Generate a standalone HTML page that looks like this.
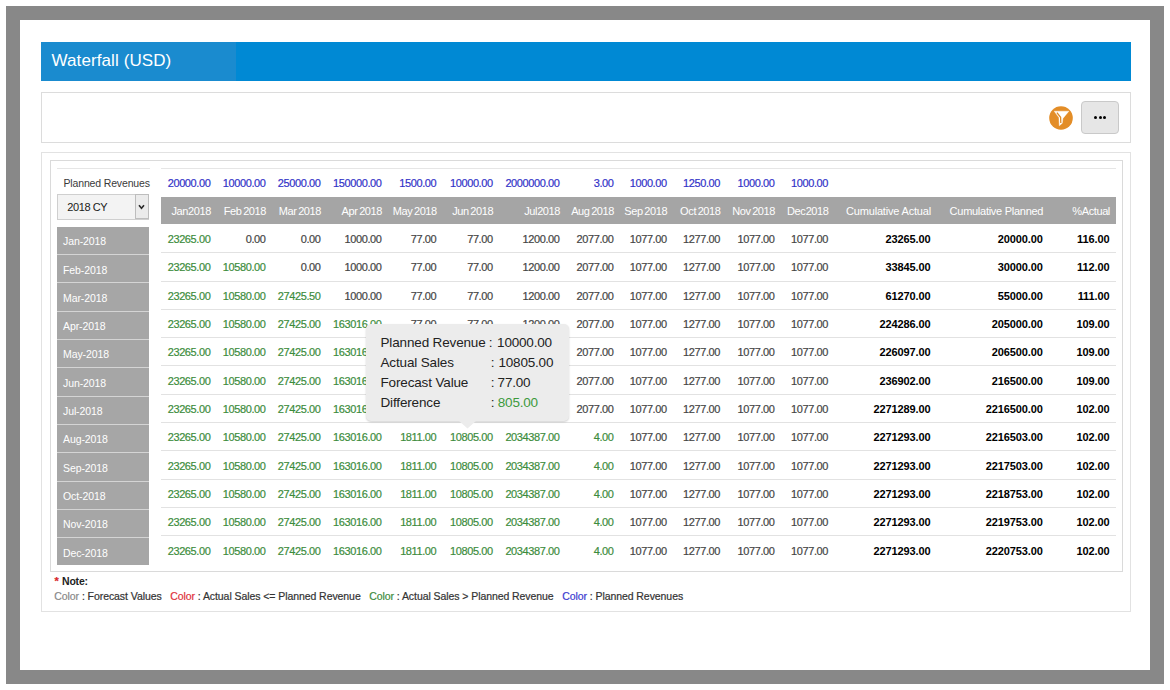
<!DOCTYPE html>
<html><head><meta charset="utf-8"><title>Waterfall (USD)</title>
<style>
html,body{margin:0;padding:0;background:#fff;}
body{width:1170px;height:690px;position:relative;overflow:hidden;font-family:"Liberation Sans", sans-serif;}
.b{position:absolute;}
.t{position:absolute;line-height:1;white-space:nowrap;-webkit-text-stroke:0.2px currentColor;}
.ns{-webkit-text-stroke:0;}
</style></head><body>
<div class="b" style="left:6px;top:6px;width:1158px;height:678px;background:#888888;"></div>
<div class="b" style="left:20px;top:20px;width:1130px;height:650px;background:#ffffff;"></div>
<div class="b" style="left:41px;top:42px;width:1090px;height:39px;background:#0089d4;"></div>
<div class="b" style="left:41px;top:42px;width:195px;height:39px;background:#1a8bcf;"></div>
<div class="t ns" style="left:51.50px;top:52.21px;font-size:17px;color:#ffffff;font-weight:normal;letter-spacing:0.1px;">Waterfall (USD)</div>
<div class="b" style="left:41px;top:92px;width:1090px;height:51px;border:1px solid #dcdcdc;box-sizing:border-box;"></div>
<svg class="b" style="left:1049px;top:106px" width="24" height="24" viewBox="0 0 24 24"><circle cx="12" cy="12" r="11.8" fill="#e38d27"/><path d="M5.2 5.2 L19.9 5.2 L13.9 12.4 L13.3 17.2 L10.3 19.8 L9.9 11.6 Z" fill="#ffffff" stroke="#ffffff" stroke-width="0.4" stroke-linejoin="round"/><path d="M7.9 6.6 L11.6 11.3 L11.8 17" stroke="#df8a25" stroke-width="1.3" fill="none"/></svg>
<div class="b" style="left:1081px;top:101px;width:38px;height:33px;box-sizing:border-box;border:1px solid #c9c9c9;border-radius:4px;background:#e6e6e6;"></div>
<div class="b" style="left:1094.00px;top:115.50px;width:3.2px;height:3.2px;border-radius:50%;background:#000;"></div>
<div class="b" style="left:1098.50px;top:115.50px;width:3.2px;height:3.2px;border-radius:50%;background:#000;"></div>
<div class="b" style="left:1103.00px;top:115.50px;width:3.2px;height:3.2px;border-radius:50%;background:#000;"></div>
<div class="b" style="left:41px;top:152px;width:1090px;height:460px;border:1px solid #e2e2e2;box-sizing:border-box;"></div>
<div class="b" style="left:50px;top:160px;width:1073px;height:412px;border:1px solid #dadada;box-sizing:border-box;"></div>
<div class="b" style="left:57px;top:167.5px;width:93px;height:1.5px;background:#e6e6e6;"></div>
<div class="b" style="left:161px;top:167.5px;width:955px;height:1.5px;background:#e6e6e6;"></div>
<div class="t ns" style="left:63.50px;top:178.11px;font-size:10.5px;color:#3a3a3a;font-weight:normal;letter-spacing:-0.15px;">Planned Revenues</div>
<div class="b" style="left:57px;top:194px;width:92px;height:26px;border:1px solid #cfcfcf;box-sizing:border-box;background:#f3f3f3;"></div>
<div class="b" style="left:135px;top:194px;width:14px;height:25px;border:1px solid #bdbdbd;box-sizing:border-box;background:#ebebeb;"></div>
<svg class="b" style="left:138px;top:203.5px" width="7" height="6" viewBox="0 0 7 6"><path d="M1.0 1.3 L3.5 4.3 L6.0 1.3" stroke="#2a2a2a" stroke-width="1.6" fill="none"/></svg>
<div class="t ns" style="left:67.30px;top:201.89px;font-size:11px;color:#1a1a1a;font-weight:normal;letter-spacing:-0.4px;">2018 CY</div>
<div class="b" style="left:161px;top:197px;width:955px;height:27px;background:#a5a5a5;"></div>
<div class="t" style="right:959.60px;top:178.09px;font-size:11.0px;color:#3232c8;font-weight:normal;letter-spacing:-0.4px;">20000.00</div>
<div class="t" style="right:904.50px;top:178.09px;font-size:11.0px;color:#3232c8;font-weight:normal;letter-spacing:-0.4px;">10000.00</div>
<div class="t" style="right:849.50px;top:178.09px;font-size:11.0px;color:#3232c8;font-weight:normal;letter-spacing:-0.4px;">25000.00</div>
<div class="t" style="right:788.50px;top:178.09px;font-size:11.0px;color:#3232c8;font-weight:normal;letter-spacing:-0.4px;">150000.00</div>
<div class="t" style="right:733.70px;top:178.09px;font-size:11.0px;color:#3232c8;font-weight:normal;letter-spacing:-0.4px;">1500.00</div>
<div class="t" style="right:677.30px;top:178.09px;font-size:11.0px;color:#3232c8;font-weight:normal;letter-spacing:-0.4px;">10000.00</div>
<div class="t" style="right:610.50px;top:178.09px;font-size:11.0px;color:#3232c8;font-weight:normal;letter-spacing:-0.4px;">2000000.00</div>
<div class="t" style="right:556.50px;top:178.09px;font-size:11.0px;color:#3232c8;font-weight:normal;letter-spacing:-0.4px;">3.00</div>
<div class="t" style="right:503.30px;top:178.09px;font-size:11.0px;color:#3232c8;font-weight:normal;letter-spacing:-0.4px;">1000.00</div>
<div class="t" style="right:450.00px;top:178.09px;font-size:11.0px;color:#3232c8;font-weight:normal;letter-spacing:-0.4px;">1250.00</div>
<div class="t" style="right:395.50px;top:178.09px;font-size:11.0px;color:#3232c8;font-weight:normal;letter-spacing:-0.4px;">1000.00</div>
<div class="t" style="right:342.00px;top:178.09px;font-size:11.0px;color:#3232c8;font-weight:normal;letter-spacing:-0.4px;">1000.00</div>
<div class="t ns" style="right:959.10px;top:205.99px;font-size:11.0px;color:#ffffff;font-weight:normal;letter-spacing:-0.4px;">Ja<span style="margin-right:0px">n</span>2018</div>
<div class="t ns" style="right:904.00px;top:205.99px;font-size:11.0px;color:#ffffff;font-weight:normal;letter-spacing:-0.4px;">Fe<span style="margin-right:1.6px">b</span>2018</div>
<div class="t ns" style="right:849.00px;top:205.99px;font-size:11.0px;color:#ffffff;font-weight:normal;letter-spacing:-0.4px;">Ma<span style="margin-right:1.6px">r</span>2018</div>
<div class="t ns" style="right:788.00px;top:205.99px;font-size:11.0px;color:#ffffff;font-weight:normal;letter-spacing:-0.4px;">Ap<span style="margin-right:1.6px">r</span>2018</div>
<div class="t ns" style="right:733.20px;top:205.99px;font-size:11.0px;color:#ffffff;font-weight:normal;letter-spacing:-0.4px;">Ma<span style="margin-right:1.6px">y</span>2018</div>
<div class="t ns" style="right:676.80px;top:205.99px;font-size:11.0px;color:#ffffff;font-weight:normal;letter-spacing:-0.4px;">Ju<span style="margin-right:1.6px">n</span>2018</div>
<div class="t ns" style="right:610.00px;top:205.99px;font-size:11.0px;color:#ffffff;font-weight:normal;letter-spacing:-0.4px;">Ju<span style="margin-right:0px">l</span>2018</div>
<div class="t ns" style="right:556.00px;top:205.99px;font-size:11.0px;color:#ffffff;font-weight:normal;letter-spacing:-0.4px;">Au<span style="margin-right:1.6px">g</span>2018</div>
<div class="t ns" style="right:502.80px;top:205.99px;font-size:11.0px;color:#ffffff;font-weight:normal;letter-spacing:-0.4px;">Se<span style="margin-right:1.6px">p</span>2018</div>
<div class="t ns" style="right:449.50px;top:205.99px;font-size:11.0px;color:#ffffff;font-weight:normal;letter-spacing:-0.4px;">Oc<span style="margin-right:1.6px">t</span>2018</div>
<div class="t ns" style="right:395.00px;top:205.99px;font-size:11.0px;color:#ffffff;font-weight:normal;letter-spacing:-0.4px;">No<span style="margin-right:1.6px">v</span>2018</div>
<div class="t ns" style="right:341.50px;top:205.99px;font-size:11.0px;color:#ffffff;font-weight:normal;letter-spacing:-0.4px;">De<span style="margin-right:0.3px">c</span>2018</div>
<div class="t ns" style="right:239.00px;top:205.99px;font-size:11.0px;color:#ffffff;font-weight:normal;letter-spacing:-0.18px;">Cumulative Actual</div>
<div class="t ns" style="right:126.80px;top:205.99px;font-size:11.0px;color:#ffffff;font-weight:normal;letter-spacing:-0.27px;">Cumulative Planned</div>
<div class="t ns" style="right:60.10px;top:205.99px;font-size:11.0px;color:#ffffff;font-weight:normal;letter-spacing:-0.4px;">%Actual</div>
<div class="b" style="left:57px;top:226.6px;width:92px;height:338.4px;background:#a6a6a6;"></div>
<div class="b" style="left:57px;top:254px;width:92px;height:1px;background:#d4d4d4;"></div>
<div class="t ns" style="left:63.00px;top:236.21px;font-size:10.5px;color:#ffffff;font-weight:normal;letter-spacing:-0.1px;">Jan-2018</div>
<div class="b" style="left:57px;top:282px;width:92px;height:1px;background:#d4d4d4;"></div>
<div class="t ns" style="left:63.00px;top:264.53px;font-size:10.5px;color:#ffffff;font-weight:normal;letter-spacing:-0.1px;">Feb-2018</div>
<div class="b" style="left:57px;top:311px;width:92px;height:1px;background:#d4d4d4;"></div>
<div class="t ns" style="left:63.00px;top:292.85px;font-size:10.5px;color:#ffffff;font-weight:normal;letter-spacing:-0.1px;">Mar-2018</div>
<div class="b" style="left:57px;top:339px;width:92px;height:1px;background:#d4d4d4;"></div>
<div class="t ns" style="left:63.00px;top:321.17px;font-size:10.5px;color:#ffffff;font-weight:normal;letter-spacing:-0.1px;">Apr-2018</div>
<div class="b" style="left:57px;top:367px;width:92px;height:1px;background:#d4d4d4;"></div>
<div class="t ns" style="left:63.00px;top:349.49px;font-size:10.5px;color:#ffffff;font-weight:normal;letter-spacing:-0.1px;">May-2018</div>
<div class="b" style="left:57px;top:396px;width:92px;height:1px;background:#d4d4d4;"></div>
<div class="t ns" style="left:63.00px;top:377.81px;font-size:10.5px;color:#ffffff;font-weight:normal;letter-spacing:-0.1px;">Jun-2018</div>
<div class="b" style="left:57px;top:424px;width:92px;height:1px;background:#d4d4d4;"></div>
<div class="t ns" style="left:63.00px;top:406.13px;font-size:10.5px;color:#ffffff;font-weight:normal;letter-spacing:-0.1px;">Jul-2018</div>
<div class="b" style="left:57px;top:452px;width:92px;height:1px;background:#d4d4d4;"></div>
<div class="t ns" style="left:63.00px;top:434.45px;font-size:10.5px;color:#ffffff;font-weight:normal;letter-spacing:-0.1px;">Aug-2018</div>
<div class="b" style="left:57px;top:481px;width:92px;height:1px;background:#d4d4d4;"></div>
<div class="t ns" style="left:63.00px;top:462.77px;font-size:10.5px;color:#ffffff;font-weight:normal;letter-spacing:-0.1px;">Sep-2018</div>
<div class="b" style="left:57px;top:509px;width:92px;height:1px;background:#d4d4d4;"></div>
<div class="t ns" style="left:63.00px;top:491.09px;font-size:10.5px;color:#ffffff;font-weight:normal;letter-spacing:-0.1px;">Oct-2018</div>
<div class="b" style="left:57px;top:537px;width:92px;height:1px;background:#d4d4d4;"></div>
<div class="t ns" style="left:63.00px;top:519.41px;font-size:10.5px;color:#ffffff;font-weight:normal;letter-spacing:-0.1px;">Nov-2018</div>
<div class="t ns" style="left:63.00px;top:547.73px;font-size:10.5px;color:#ffffff;font-weight:normal;letter-spacing:-0.1px;">Dec-2018</div>
<div class="b" style="left:161px;top:252px;width:955px;height:1px;background:#e2e2e2;"></div>
<div class="b" style="left:161px;top:281px;width:955px;height:1px;background:#e2e2e2;"></div>
<div class="b" style="left:161px;top:309px;width:955px;height:1px;background:#e2e2e2;"></div>
<div class="b" style="left:161px;top:337px;width:955px;height:1px;background:#e2e2e2;"></div>
<div class="b" style="left:161px;top:365px;width:955px;height:1px;background:#e2e2e2;"></div>
<div class="b" style="left:161px;top:394px;width:955px;height:1px;background:#e2e2e2;"></div>
<div class="b" style="left:161px;top:422px;width:955px;height:1px;background:#e2e2e2;"></div>
<div class="b" style="left:161px;top:450px;width:955px;height:1px;background:#e2e2e2;"></div>
<div class="b" style="left:161px;top:479px;width:955px;height:1px;background:#e2e2e2;"></div>
<div class="b" style="left:161px;top:507px;width:955px;height:1px;background:#e2e2e2;"></div>
<div class="b" style="left:161px;top:535px;width:955px;height:1px;background:#e2e2e2;"></div>
<div class="t" style="right:959.60px;top:234.09px;font-size:11.0px;color:#3c8c3c;font-weight:normal;letter-spacing:-0.4px;">23265.00</div>
<div class="t" style="right:904.50px;top:234.09px;font-size:11.0px;color:#454545;font-weight:normal;letter-spacing:-0.4px;">0.00</div>
<div class="t" style="right:849.50px;top:234.09px;font-size:11.0px;color:#454545;font-weight:normal;letter-spacing:-0.4px;">0.00</div>
<div class="t" style="right:788.50px;top:234.09px;font-size:11.0px;color:#454545;font-weight:normal;letter-spacing:-0.4px;">1000.00</div>
<div class="t" style="right:733.70px;top:234.09px;font-size:11.0px;color:#454545;font-weight:normal;letter-spacing:-0.4px;">77.00</div>
<div class="t" style="right:677.30px;top:234.09px;font-size:11.0px;color:#454545;font-weight:normal;letter-spacing:-0.4px;">77.00</div>
<div class="t" style="right:610.50px;top:234.09px;font-size:11.0px;color:#454545;font-weight:normal;letter-spacing:-0.4px;">1200.00</div>
<div class="t" style="right:556.50px;top:234.09px;font-size:11.0px;color:#454545;font-weight:normal;letter-spacing:-0.4px;">2077.00</div>
<div class="t" style="right:503.30px;top:234.09px;font-size:11.0px;color:#454545;font-weight:normal;letter-spacing:-0.4px;">1077.00</div>
<div class="t" style="right:450.00px;top:234.09px;font-size:11.0px;color:#454545;font-weight:normal;letter-spacing:-0.4px;">1277.00</div>
<div class="t" style="right:395.50px;top:234.09px;font-size:11.0px;color:#454545;font-weight:normal;letter-spacing:-0.4px;">1077.00</div>
<div class="t" style="right:342.00px;top:234.09px;font-size:11.0px;color:#454545;font-weight:normal;letter-spacing:-0.4px;">1077.00</div>
<div class="t ns" style="right:239.50px;top:234.09px;font-size:11.0px;color:#000;font-weight:bold;letter-spacing:-0.12px;">23265.00</div>
<div class="t ns" style="right:127.30px;top:234.09px;font-size:11.0px;color:#000;font-weight:bold;letter-spacing:-0.12px;">20000.00</div>
<div class="t ns" style="right:60.60px;top:234.09px;font-size:11.0px;color:#000;font-weight:bold;letter-spacing:-0.12px;">116.00</div>
<div class="t" style="right:959.60px;top:262.41px;font-size:11.0px;color:#3c8c3c;font-weight:normal;letter-spacing:-0.4px;">23265.00</div>
<div class="t" style="right:904.50px;top:262.41px;font-size:11.0px;color:#3c8c3c;font-weight:normal;letter-spacing:-0.4px;">10580.00</div>
<div class="t" style="right:849.50px;top:262.41px;font-size:11.0px;color:#454545;font-weight:normal;letter-spacing:-0.4px;">0.00</div>
<div class="t" style="right:788.50px;top:262.41px;font-size:11.0px;color:#454545;font-weight:normal;letter-spacing:-0.4px;">1000.00</div>
<div class="t" style="right:733.70px;top:262.41px;font-size:11.0px;color:#454545;font-weight:normal;letter-spacing:-0.4px;">77.00</div>
<div class="t" style="right:677.30px;top:262.41px;font-size:11.0px;color:#454545;font-weight:normal;letter-spacing:-0.4px;">77.00</div>
<div class="t" style="right:610.50px;top:262.41px;font-size:11.0px;color:#454545;font-weight:normal;letter-spacing:-0.4px;">1200.00</div>
<div class="t" style="right:556.50px;top:262.41px;font-size:11.0px;color:#454545;font-weight:normal;letter-spacing:-0.4px;">2077.00</div>
<div class="t" style="right:503.30px;top:262.41px;font-size:11.0px;color:#454545;font-weight:normal;letter-spacing:-0.4px;">1077.00</div>
<div class="t" style="right:450.00px;top:262.41px;font-size:11.0px;color:#454545;font-weight:normal;letter-spacing:-0.4px;">1277.00</div>
<div class="t" style="right:395.50px;top:262.41px;font-size:11.0px;color:#454545;font-weight:normal;letter-spacing:-0.4px;">1077.00</div>
<div class="t" style="right:342.00px;top:262.41px;font-size:11.0px;color:#454545;font-weight:normal;letter-spacing:-0.4px;">1077.00</div>
<div class="t ns" style="right:239.50px;top:262.41px;font-size:11.0px;color:#000;font-weight:bold;letter-spacing:-0.12px;">33845.00</div>
<div class="t ns" style="right:127.30px;top:262.41px;font-size:11.0px;color:#000;font-weight:bold;letter-spacing:-0.12px;">30000.00</div>
<div class="t ns" style="right:60.60px;top:262.41px;font-size:11.0px;color:#000;font-weight:bold;letter-spacing:-0.12px;">112.00</div>
<div class="t" style="right:959.60px;top:290.73px;font-size:11.0px;color:#3c8c3c;font-weight:normal;letter-spacing:-0.4px;">23265.00</div>
<div class="t" style="right:904.50px;top:290.73px;font-size:11.0px;color:#3c8c3c;font-weight:normal;letter-spacing:-0.4px;">10580.00</div>
<div class="t" style="right:849.50px;top:290.73px;font-size:11.0px;color:#3c8c3c;font-weight:normal;letter-spacing:-0.4px;">27425.50</div>
<div class="t" style="right:788.50px;top:290.73px;font-size:11.0px;color:#454545;font-weight:normal;letter-spacing:-0.4px;">1000.00</div>
<div class="t" style="right:733.70px;top:290.73px;font-size:11.0px;color:#454545;font-weight:normal;letter-spacing:-0.4px;">77.00</div>
<div class="t" style="right:677.30px;top:290.73px;font-size:11.0px;color:#454545;font-weight:normal;letter-spacing:-0.4px;">77.00</div>
<div class="t" style="right:610.50px;top:290.73px;font-size:11.0px;color:#454545;font-weight:normal;letter-spacing:-0.4px;">1200.00</div>
<div class="t" style="right:556.50px;top:290.73px;font-size:11.0px;color:#454545;font-weight:normal;letter-spacing:-0.4px;">2077.00</div>
<div class="t" style="right:503.30px;top:290.73px;font-size:11.0px;color:#454545;font-weight:normal;letter-spacing:-0.4px;">1077.00</div>
<div class="t" style="right:450.00px;top:290.73px;font-size:11.0px;color:#454545;font-weight:normal;letter-spacing:-0.4px;">1277.00</div>
<div class="t" style="right:395.50px;top:290.73px;font-size:11.0px;color:#454545;font-weight:normal;letter-spacing:-0.4px;">1077.00</div>
<div class="t" style="right:342.00px;top:290.73px;font-size:11.0px;color:#454545;font-weight:normal;letter-spacing:-0.4px;">1077.00</div>
<div class="t ns" style="right:239.50px;top:290.73px;font-size:11.0px;color:#000;font-weight:bold;letter-spacing:-0.12px;">61270.00</div>
<div class="t ns" style="right:127.30px;top:290.73px;font-size:11.0px;color:#000;font-weight:bold;letter-spacing:-0.12px;">55000.00</div>
<div class="t ns" style="right:60.60px;top:290.73px;font-size:11.0px;color:#000;font-weight:bold;letter-spacing:-0.12px;">111.00</div>
<div class="t" style="right:959.60px;top:319.05px;font-size:11.0px;color:#3c8c3c;font-weight:normal;letter-spacing:-0.4px;">23265.00</div>
<div class="t" style="right:904.50px;top:319.05px;font-size:11.0px;color:#3c8c3c;font-weight:normal;letter-spacing:-0.4px;">10580.00</div>
<div class="t" style="right:849.50px;top:319.05px;font-size:11.0px;color:#3c8c3c;font-weight:normal;letter-spacing:-0.4px;">27425.00</div>
<div class="t" style="right:788.50px;top:319.05px;font-size:11.0px;color:#3c8c3c;font-weight:normal;letter-spacing:-0.4px;">163016.00</div>
<div class="t" style="right:733.70px;top:319.05px;font-size:11.0px;color:#454545;font-weight:normal;letter-spacing:-0.4px;">77.00</div>
<div class="t" style="right:677.30px;top:319.05px;font-size:11.0px;color:#454545;font-weight:normal;letter-spacing:-0.4px;">77.00</div>
<div class="t" style="right:610.50px;top:319.05px;font-size:11.0px;color:#454545;font-weight:normal;letter-spacing:-0.4px;">1200.00</div>
<div class="t" style="right:556.50px;top:319.05px;font-size:11.0px;color:#454545;font-weight:normal;letter-spacing:-0.4px;">2077.00</div>
<div class="t" style="right:503.30px;top:319.05px;font-size:11.0px;color:#454545;font-weight:normal;letter-spacing:-0.4px;">1077.00</div>
<div class="t" style="right:450.00px;top:319.05px;font-size:11.0px;color:#454545;font-weight:normal;letter-spacing:-0.4px;">1277.00</div>
<div class="t" style="right:395.50px;top:319.05px;font-size:11.0px;color:#454545;font-weight:normal;letter-spacing:-0.4px;">1077.00</div>
<div class="t" style="right:342.00px;top:319.05px;font-size:11.0px;color:#454545;font-weight:normal;letter-spacing:-0.4px;">1077.00</div>
<div class="t ns" style="right:239.50px;top:319.05px;font-size:11.0px;color:#000;font-weight:bold;letter-spacing:-0.12px;">224286.00</div>
<div class="t ns" style="right:127.30px;top:319.05px;font-size:11.0px;color:#000;font-weight:bold;letter-spacing:-0.12px;">205000.00</div>
<div class="t ns" style="right:60.60px;top:319.05px;font-size:11.0px;color:#000;font-weight:bold;letter-spacing:-0.12px;">109.00</div>
<div class="t" style="right:959.60px;top:347.37px;font-size:11.0px;color:#3c8c3c;font-weight:normal;letter-spacing:-0.4px;">23265.00</div>
<div class="t" style="right:904.50px;top:347.37px;font-size:11.0px;color:#3c8c3c;font-weight:normal;letter-spacing:-0.4px;">10580.00</div>
<div class="t" style="right:849.50px;top:347.37px;font-size:11.0px;color:#3c8c3c;font-weight:normal;letter-spacing:-0.4px;">27425.00</div>
<div class="t" style="right:788.50px;top:347.37px;font-size:11.0px;color:#3c8c3c;font-weight:normal;letter-spacing:-0.4px;">163016.00</div>
<div class="t" style="right:733.70px;top:347.37px;font-size:11.0px;color:#3c8c3c;font-weight:normal;letter-spacing:-0.4px;">1811.00</div>
<div class="t" style="right:677.30px;top:347.37px;font-size:11.0px;color:#454545;font-weight:normal;letter-spacing:-0.4px;">77.00</div>
<div class="t" style="right:610.50px;top:347.37px;font-size:11.0px;color:#454545;font-weight:normal;letter-spacing:-0.4px;">1200.00</div>
<div class="t" style="right:556.50px;top:347.37px;font-size:11.0px;color:#454545;font-weight:normal;letter-spacing:-0.4px;">2077.00</div>
<div class="t" style="right:503.30px;top:347.37px;font-size:11.0px;color:#454545;font-weight:normal;letter-spacing:-0.4px;">1077.00</div>
<div class="t" style="right:450.00px;top:347.37px;font-size:11.0px;color:#454545;font-weight:normal;letter-spacing:-0.4px;">1277.00</div>
<div class="t" style="right:395.50px;top:347.37px;font-size:11.0px;color:#454545;font-weight:normal;letter-spacing:-0.4px;">1077.00</div>
<div class="t" style="right:342.00px;top:347.37px;font-size:11.0px;color:#454545;font-weight:normal;letter-spacing:-0.4px;">1077.00</div>
<div class="t ns" style="right:239.50px;top:347.37px;font-size:11.0px;color:#000;font-weight:bold;letter-spacing:-0.12px;">226097.00</div>
<div class="t ns" style="right:127.30px;top:347.37px;font-size:11.0px;color:#000;font-weight:bold;letter-spacing:-0.12px;">206500.00</div>
<div class="t ns" style="right:60.60px;top:347.37px;font-size:11.0px;color:#000;font-weight:bold;letter-spacing:-0.12px;">109.00</div>
<div class="t" style="right:959.60px;top:375.69px;font-size:11.0px;color:#3c8c3c;font-weight:normal;letter-spacing:-0.4px;">23265.00</div>
<div class="t" style="right:904.50px;top:375.69px;font-size:11.0px;color:#3c8c3c;font-weight:normal;letter-spacing:-0.4px;">10580.00</div>
<div class="t" style="right:849.50px;top:375.69px;font-size:11.0px;color:#3c8c3c;font-weight:normal;letter-spacing:-0.4px;">27425.00</div>
<div class="t" style="right:788.50px;top:375.69px;font-size:11.0px;color:#3c8c3c;font-weight:normal;letter-spacing:-0.4px;">163016.00</div>
<div class="t" style="right:733.70px;top:375.69px;font-size:11.0px;color:#3c8c3c;font-weight:normal;letter-spacing:-0.4px;">1811.00</div>
<div class="t" style="right:677.30px;top:375.69px;font-size:11.0px;color:#3c8c3c;font-weight:normal;letter-spacing:-0.4px;">10805.00</div>
<div class="t" style="right:610.50px;top:375.69px;font-size:11.0px;color:#454545;font-weight:normal;letter-spacing:-0.4px;">1200.00</div>
<div class="t" style="right:556.50px;top:375.69px;font-size:11.0px;color:#454545;font-weight:normal;letter-spacing:-0.4px;">2077.00</div>
<div class="t" style="right:503.30px;top:375.69px;font-size:11.0px;color:#454545;font-weight:normal;letter-spacing:-0.4px;">1077.00</div>
<div class="t" style="right:450.00px;top:375.69px;font-size:11.0px;color:#454545;font-weight:normal;letter-spacing:-0.4px;">1277.00</div>
<div class="t" style="right:395.50px;top:375.69px;font-size:11.0px;color:#454545;font-weight:normal;letter-spacing:-0.4px;">1077.00</div>
<div class="t" style="right:342.00px;top:375.69px;font-size:11.0px;color:#454545;font-weight:normal;letter-spacing:-0.4px;">1077.00</div>
<div class="t ns" style="right:239.50px;top:375.69px;font-size:11.0px;color:#000;font-weight:bold;letter-spacing:-0.12px;">236902.00</div>
<div class="t ns" style="right:127.30px;top:375.69px;font-size:11.0px;color:#000;font-weight:bold;letter-spacing:-0.12px;">216500.00</div>
<div class="t ns" style="right:60.60px;top:375.69px;font-size:11.0px;color:#000;font-weight:bold;letter-spacing:-0.12px;">109.00</div>
<div class="t" style="right:959.60px;top:404.01px;font-size:11.0px;color:#3c8c3c;font-weight:normal;letter-spacing:-0.4px;">23265.00</div>
<div class="t" style="right:904.50px;top:404.01px;font-size:11.0px;color:#3c8c3c;font-weight:normal;letter-spacing:-0.4px;">10580.00</div>
<div class="t" style="right:849.50px;top:404.01px;font-size:11.0px;color:#3c8c3c;font-weight:normal;letter-spacing:-0.4px;">27425.00</div>
<div class="t" style="right:788.50px;top:404.01px;font-size:11.0px;color:#3c8c3c;font-weight:normal;letter-spacing:-0.4px;">163016.00</div>
<div class="t" style="right:733.70px;top:404.01px;font-size:11.0px;color:#3c8c3c;font-weight:normal;letter-spacing:-0.4px;">1811.00</div>
<div class="t" style="right:677.30px;top:404.01px;font-size:11.0px;color:#3c8c3c;font-weight:normal;letter-spacing:-0.4px;">10805.00</div>
<div class="t" style="right:610.50px;top:404.01px;font-size:11.0px;color:#3c8c3c;font-weight:normal;letter-spacing:-0.4px;">2034387.00</div>
<div class="t" style="right:556.50px;top:404.01px;font-size:11.0px;color:#454545;font-weight:normal;letter-spacing:-0.4px;">2077.00</div>
<div class="t" style="right:503.30px;top:404.01px;font-size:11.0px;color:#454545;font-weight:normal;letter-spacing:-0.4px;">1077.00</div>
<div class="t" style="right:450.00px;top:404.01px;font-size:11.0px;color:#454545;font-weight:normal;letter-spacing:-0.4px;">1277.00</div>
<div class="t" style="right:395.50px;top:404.01px;font-size:11.0px;color:#454545;font-weight:normal;letter-spacing:-0.4px;">1077.00</div>
<div class="t" style="right:342.00px;top:404.01px;font-size:11.0px;color:#454545;font-weight:normal;letter-spacing:-0.4px;">1077.00</div>
<div class="t ns" style="right:239.50px;top:404.01px;font-size:11.0px;color:#000;font-weight:bold;letter-spacing:-0.12px;">2271289.00</div>
<div class="t ns" style="right:127.30px;top:404.01px;font-size:11.0px;color:#000;font-weight:bold;letter-spacing:-0.12px;">2216500.00</div>
<div class="t ns" style="right:60.60px;top:404.01px;font-size:11.0px;color:#000;font-weight:bold;letter-spacing:-0.12px;">102.00</div>
<div class="t" style="right:959.60px;top:432.33px;font-size:11.0px;color:#3c8c3c;font-weight:normal;letter-spacing:-0.4px;">23265.00</div>
<div class="t" style="right:904.50px;top:432.33px;font-size:11.0px;color:#3c8c3c;font-weight:normal;letter-spacing:-0.4px;">10580.00</div>
<div class="t" style="right:849.50px;top:432.33px;font-size:11.0px;color:#3c8c3c;font-weight:normal;letter-spacing:-0.4px;">27425.00</div>
<div class="t" style="right:788.50px;top:432.33px;font-size:11.0px;color:#3c8c3c;font-weight:normal;letter-spacing:-0.4px;">163016.00</div>
<div class="t" style="right:733.70px;top:432.33px;font-size:11.0px;color:#3c8c3c;font-weight:normal;letter-spacing:-0.4px;">1811.00</div>
<div class="t" style="right:677.30px;top:432.33px;font-size:11.0px;color:#3c8c3c;font-weight:normal;letter-spacing:-0.4px;">10805.00</div>
<div class="t" style="right:610.50px;top:432.33px;font-size:11.0px;color:#3c8c3c;font-weight:normal;letter-spacing:-0.4px;">2034387.00</div>
<div class="t" style="right:556.50px;top:432.33px;font-size:11.0px;color:#3c8c3c;font-weight:normal;letter-spacing:-0.4px;">4.00</div>
<div class="t" style="right:503.30px;top:432.33px;font-size:11.0px;color:#454545;font-weight:normal;letter-spacing:-0.4px;">1077.00</div>
<div class="t" style="right:450.00px;top:432.33px;font-size:11.0px;color:#454545;font-weight:normal;letter-spacing:-0.4px;">1277.00</div>
<div class="t" style="right:395.50px;top:432.33px;font-size:11.0px;color:#454545;font-weight:normal;letter-spacing:-0.4px;">1077.00</div>
<div class="t" style="right:342.00px;top:432.33px;font-size:11.0px;color:#454545;font-weight:normal;letter-spacing:-0.4px;">1077.00</div>
<div class="t ns" style="right:239.50px;top:432.33px;font-size:11.0px;color:#000;font-weight:bold;letter-spacing:-0.12px;">2271293.00</div>
<div class="t ns" style="right:127.30px;top:432.33px;font-size:11.0px;color:#000;font-weight:bold;letter-spacing:-0.12px;">2216503.00</div>
<div class="t ns" style="right:60.60px;top:432.33px;font-size:11.0px;color:#000;font-weight:bold;letter-spacing:-0.12px;">102.00</div>
<div class="t" style="right:959.60px;top:460.65px;font-size:11.0px;color:#3c8c3c;font-weight:normal;letter-spacing:-0.4px;">23265.00</div>
<div class="t" style="right:904.50px;top:460.65px;font-size:11.0px;color:#3c8c3c;font-weight:normal;letter-spacing:-0.4px;">10580.00</div>
<div class="t" style="right:849.50px;top:460.65px;font-size:11.0px;color:#3c8c3c;font-weight:normal;letter-spacing:-0.4px;">27425.00</div>
<div class="t" style="right:788.50px;top:460.65px;font-size:11.0px;color:#3c8c3c;font-weight:normal;letter-spacing:-0.4px;">163016.00</div>
<div class="t" style="right:733.70px;top:460.65px;font-size:11.0px;color:#3c8c3c;font-weight:normal;letter-spacing:-0.4px;">1811.00</div>
<div class="t" style="right:677.30px;top:460.65px;font-size:11.0px;color:#3c8c3c;font-weight:normal;letter-spacing:-0.4px;">10805.00</div>
<div class="t" style="right:610.50px;top:460.65px;font-size:11.0px;color:#3c8c3c;font-weight:normal;letter-spacing:-0.4px;">2034387.00</div>
<div class="t" style="right:556.50px;top:460.65px;font-size:11.0px;color:#3c8c3c;font-weight:normal;letter-spacing:-0.4px;">4.00</div>
<div class="t" style="right:503.30px;top:460.65px;font-size:11.0px;color:#454545;font-weight:normal;letter-spacing:-0.4px;">1077.00</div>
<div class="t" style="right:450.00px;top:460.65px;font-size:11.0px;color:#454545;font-weight:normal;letter-spacing:-0.4px;">1277.00</div>
<div class="t" style="right:395.50px;top:460.65px;font-size:11.0px;color:#454545;font-weight:normal;letter-spacing:-0.4px;">1077.00</div>
<div class="t" style="right:342.00px;top:460.65px;font-size:11.0px;color:#454545;font-weight:normal;letter-spacing:-0.4px;">1077.00</div>
<div class="t ns" style="right:239.50px;top:460.65px;font-size:11.0px;color:#000;font-weight:bold;letter-spacing:-0.12px;">2271293.00</div>
<div class="t ns" style="right:127.30px;top:460.65px;font-size:11.0px;color:#000;font-weight:bold;letter-spacing:-0.12px;">2217503.00</div>
<div class="t ns" style="right:60.60px;top:460.65px;font-size:11.0px;color:#000;font-weight:bold;letter-spacing:-0.12px;">102.00</div>
<div class="t" style="right:959.60px;top:488.97px;font-size:11.0px;color:#3c8c3c;font-weight:normal;letter-spacing:-0.4px;">23265.00</div>
<div class="t" style="right:904.50px;top:488.97px;font-size:11.0px;color:#3c8c3c;font-weight:normal;letter-spacing:-0.4px;">10580.00</div>
<div class="t" style="right:849.50px;top:488.97px;font-size:11.0px;color:#3c8c3c;font-weight:normal;letter-spacing:-0.4px;">27425.00</div>
<div class="t" style="right:788.50px;top:488.97px;font-size:11.0px;color:#3c8c3c;font-weight:normal;letter-spacing:-0.4px;">163016.00</div>
<div class="t" style="right:733.70px;top:488.97px;font-size:11.0px;color:#3c8c3c;font-weight:normal;letter-spacing:-0.4px;">1811.00</div>
<div class="t" style="right:677.30px;top:488.97px;font-size:11.0px;color:#3c8c3c;font-weight:normal;letter-spacing:-0.4px;">10805.00</div>
<div class="t" style="right:610.50px;top:488.97px;font-size:11.0px;color:#3c8c3c;font-weight:normal;letter-spacing:-0.4px;">2034387.00</div>
<div class="t" style="right:556.50px;top:488.97px;font-size:11.0px;color:#3c8c3c;font-weight:normal;letter-spacing:-0.4px;">4.00</div>
<div class="t" style="right:503.30px;top:488.97px;font-size:11.0px;color:#454545;font-weight:normal;letter-spacing:-0.4px;">1077.00</div>
<div class="t" style="right:450.00px;top:488.97px;font-size:11.0px;color:#454545;font-weight:normal;letter-spacing:-0.4px;">1277.00</div>
<div class="t" style="right:395.50px;top:488.97px;font-size:11.0px;color:#454545;font-weight:normal;letter-spacing:-0.4px;">1077.00</div>
<div class="t" style="right:342.00px;top:488.97px;font-size:11.0px;color:#454545;font-weight:normal;letter-spacing:-0.4px;">1077.00</div>
<div class="t ns" style="right:239.50px;top:488.97px;font-size:11.0px;color:#000;font-weight:bold;letter-spacing:-0.12px;">2271293.00</div>
<div class="t ns" style="right:127.30px;top:488.97px;font-size:11.0px;color:#000;font-weight:bold;letter-spacing:-0.12px;">2218753.00</div>
<div class="t ns" style="right:60.60px;top:488.97px;font-size:11.0px;color:#000;font-weight:bold;letter-spacing:-0.12px;">102.00</div>
<div class="t" style="right:959.60px;top:517.29px;font-size:11.0px;color:#3c8c3c;font-weight:normal;letter-spacing:-0.4px;">23265.00</div>
<div class="t" style="right:904.50px;top:517.29px;font-size:11.0px;color:#3c8c3c;font-weight:normal;letter-spacing:-0.4px;">10580.00</div>
<div class="t" style="right:849.50px;top:517.29px;font-size:11.0px;color:#3c8c3c;font-weight:normal;letter-spacing:-0.4px;">27425.00</div>
<div class="t" style="right:788.50px;top:517.29px;font-size:11.0px;color:#3c8c3c;font-weight:normal;letter-spacing:-0.4px;">163016.00</div>
<div class="t" style="right:733.70px;top:517.29px;font-size:11.0px;color:#3c8c3c;font-weight:normal;letter-spacing:-0.4px;">1811.00</div>
<div class="t" style="right:677.30px;top:517.29px;font-size:11.0px;color:#3c8c3c;font-weight:normal;letter-spacing:-0.4px;">10805.00</div>
<div class="t" style="right:610.50px;top:517.29px;font-size:11.0px;color:#3c8c3c;font-weight:normal;letter-spacing:-0.4px;">2034387.00</div>
<div class="t" style="right:556.50px;top:517.29px;font-size:11.0px;color:#3c8c3c;font-weight:normal;letter-spacing:-0.4px;">4.00</div>
<div class="t" style="right:503.30px;top:517.29px;font-size:11.0px;color:#454545;font-weight:normal;letter-spacing:-0.4px;">1077.00</div>
<div class="t" style="right:450.00px;top:517.29px;font-size:11.0px;color:#454545;font-weight:normal;letter-spacing:-0.4px;">1277.00</div>
<div class="t" style="right:395.50px;top:517.29px;font-size:11.0px;color:#454545;font-weight:normal;letter-spacing:-0.4px;">1077.00</div>
<div class="t" style="right:342.00px;top:517.29px;font-size:11.0px;color:#454545;font-weight:normal;letter-spacing:-0.4px;">1077.00</div>
<div class="t ns" style="right:239.50px;top:517.29px;font-size:11.0px;color:#000;font-weight:bold;letter-spacing:-0.12px;">2271293.00</div>
<div class="t ns" style="right:127.30px;top:517.29px;font-size:11.0px;color:#000;font-weight:bold;letter-spacing:-0.12px;">2219753.00</div>
<div class="t ns" style="right:60.60px;top:517.29px;font-size:11.0px;color:#000;font-weight:bold;letter-spacing:-0.12px;">102.00</div>
<div class="t" style="right:959.60px;top:545.61px;font-size:11.0px;color:#3c8c3c;font-weight:normal;letter-spacing:-0.4px;">23265.00</div>
<div class="t" style="right:904.50px;top:545.61px;font-size:11.0px;color:#3c8c3c;font-weight:normal;letter-spacing:-0.4px;">10580.00</div>
<div class="t" style="right:849.50px;top:545.61px;font-size:11.0px;color:#3c8c3c;font-weight:normal;letter-spacing:-0.4px;">27425.00</div>
<div class="t" style="right:788.50px;top:545.61px;font-size:11.0px;color:#3c8c3c;font-weight:normal;letter-spacing:-0.4px;">163016.00</div>
<div class="t" style="right:733.70px;top:545.61px;font-size:11.0px;color:#3c8c3c;font-weight:normal;letter-spacing:-0.4px;">1811.00</div>
<div class="t" style="right:677.30px;top:545.61px;font-size:11.0px;color:#3c8c3c;font-weight:normal;letter-spacing:-0.4px;">10805.00</div>
<div class="t" style="right:610.50px;top:545.61px;font-size:11.0px;color:#3c8c3c;font-weight:normal;letter-spacing:-0.4px;">2034387.00</div>
<div class="t" style="right:556.50px;top:545.61px;font-size:11.0px;color:#3c8c3c;font-weight:normal;letter-spacing:-0.4px;">4.00</div>
<div class="t" style="right:503.30px;top:545.61px;font-size:11.0px;color:#454545;font-weight:normal;letter-spacing:-0.4px;">1077.00</div>
<div class="t" style="right:450.00px;top:545.61px;font-size:11.0px;color:#454545;font-weight:normal;letter-spacing:-0.4px;">1277.00</div>
<div class="t" style="right:395.50px;top:545.61px;font-size:11.0px;color:#454545;font-weight:normal;letter-spacing:-0.4px;">1077.00</div>
<div class="t" style="right:342.00px;top:545.61px;font-size:11.0px;color:#454545;font-weight:normal;letter-spacing:-0.4px;">1077.00</div>
<div class="t ns" style="right:239.50px;top:545.61px;font-size:11.0px;color:#000;font-weight:bold;letter-spacing:-0.12px;">2271293.00</div>
<div class="t ns" style="right:127.30px;top:545.61px;font-size:11.0px;color:#000;font-weight:bold;letter-spacing:-0.12px;">2220753.00</div>
<div class="t ns" style="right:60.60px;top:545.61px;font-size:11.0px;color:#000;font-weight:bold;letter-spacing:-0.12px;">102.00</div>
<div class="t" style="left:54.50px;top:575.69px;font-size:11px;color:#d9262b;font-weight:bold;letter-spacing:0px;">*</div>
<div class="t ns" style="left:62.00px;top:575.51px;font-size:10.5px;color:#222;font-weight:bold;letter-spacing:-0.2px;">Note:</div>
<div class="t" style="left:54.30px;top:590.91px;font-size:10.5px;color:#333;font-weight:normal;letter-spacing:-0.07px;white-space:pre;"><span style="color:#888">Color</span> : Forecast Values&nbsp;&nbsp; <span style="color:#e0303a">Color</span> : Actual Sales &lt;= Planned Revenue&nbsp;&nbsp; <span style="color:#3c8c3c">Color</span> : Actual Sales &gt; Planned Revenue&nbsp;&nbsp; <span style="color:#3a3ad0">Color</span> : Planned Revenues</div>
<div class="b" style="left:366px;top:324px;width:203px;height:97px;background:#ececec;border-radius:5px;box-shadow:0 1px 2px rgba(0,0,0,0.18);"></div>
<svg class="b" style="left:458px;top:420px" width="19" height="9" viewBox="0 0 19 9"><path d="M0 0 L9.5 8.5 L19 0 Z" fill="#ececec"/></svg>
<div class="t ns" style="left:380.50px;top:336.27px;font-size:13.5px;color:#222;font-weight:normal;letter-spacing:-0.15px;">Planned Revenue</div>
<div class="t ns" style="left:488.70px;top:336.27px;font-size:13.5px;color:#222;font-weight:normal;letter-spacing:0px;">:</div>
<div class="t ns" style="left:497.10px;top:336.27px;font-size:13.5px;color:#222;font-weight:normal;letter-spacing:-0.2px;">10000.00</div>
<div class="t ns" style="left:380.50px;top:356.27px;font-size:13.5px;color:#222;font-weight:normal;letter-spacing:-0.15px;">Actual Sales</div>
<div class="t ns" style="left:490.70px;top:356.27px;font-size:13.5px;color:#222;font-weight:normal;letter-spacing:0px;">:</div>
<div class="t ns" style="left:498.50px;top:356.27px;font-size:13.5px;color:#222;font-weight:normal;letter-spacing:-0.2px;">10805.00</div>
<div class="t ns" style="left:380.50px;top:376.27px;font-size:13.5px;color:#222;font-weight:normal;letter-spacing:-0.15px;">Forecast Value</div>
<div class="t ns" style="left:490.70px;top:376.27px;font-size:13.5px;color:#222;font-weight:normal;letter-spacing:0px;">:</div>
<div class="t ns" style="left:497.60px;top:376.27px;font-size:13.5px;color:#222;font-weight:normal;letter-spacing:-0.2px;">77.00</div>
<div class="t ns" style="left:380.50px;top:396.27px;font-size:13.5px;color:#222;font-weight:normal;letter-spacing:-0.15px;">Difference</div>
<div class="t ns" style="left:490.70px;top:396.27px;font-size:13.5px;color:#222;font-weight:normal;letter-spacing:0px;">:</div>
<div class="t ns" style="left:497.80px;top:396.27px;font-size:13.5px;color:#3c9a3c;font-weight:normal;letter-spacing:-0.2px;">805.00</div>
</body></html>
